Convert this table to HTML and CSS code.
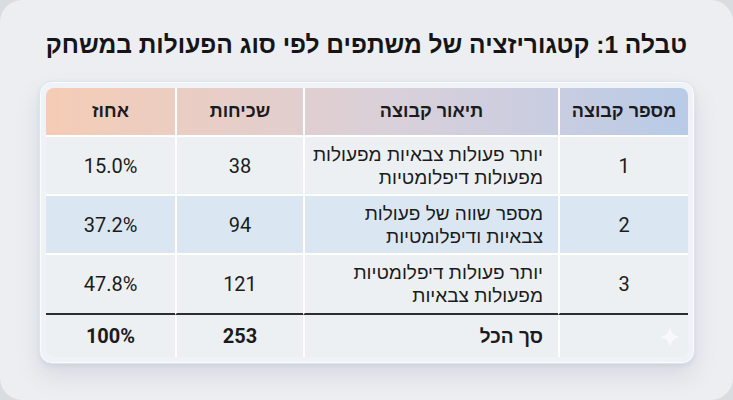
FILE: index.html
```html
<!DOCTYPE html>
<html lang="he" dir="rtl">
<head>
<meta charset="utf-8">
<title>טבלה 1</title>
<link rel="stylesheet" href="styles.css">
</head>
<body>
<div class="page">
  <h1 class="title">טבלה 1: קטגוריזציה של משתפים לפי סוג הפעולות במשחק</h1>
  <div class="frame">
    <div class="inner">
      <table class="tbl">
        <colgroup>
          <col class="c-group"><col class="c-desc"><col class="c-count"><col class="c-pct">
        </colgroup>
        <thead>
          <tr class="head">
            <th>מספר קבוצה</th>
            <th>תיאור קבוצה</th>
            <th>שכיחות</th>
            <th>אחוז</th>
          </tr>
        </thead>
        <tbody>
          <tr class="row">
            <td class="num">1</td>
            <td class="desc">יותר פעולות צבאיות מפעולות<br>מפעולות דיפלומטיות</td>
            <td class="num">38</td>
            <td class="num">15.0%</td>
          </tr>
          <tr class="row alt">
            <td class="num">2</td>
            <td class="desc">מספר שווה של פעולות<br>צבאיות ודיפלומטיות</td>
            <td class="num">94</td>
            <td class="num">37.2%</td>
          </tr>
          <tr class="row last">
            <td class="num">3</td>
            <td class="desc">יותר פעולות דיפלומטיות<br>מפעולות צבאיות</td>
            <td class="num">121</td>
            <td class="num">47.8%</td>
          </tr>
          <tr class="total">
            <td class="num mark-cell"><span class="mark"><svg width="22" height="22" viewBox="0 0 22 22"><path d="M11 1 C12 7 15 10 21 11 C15 12 12 15 11 21 C10 15 7 12 1 11 C7 10 10 7 11 1 Z" fill="#ffffff"/></svg></span></td>
            <td class="desc">סך הכל</td>
            <td class="num">253</td>
            <td class="num">100%</td>
          </tr>
        </tbody>
      </table>
    </div>
  </div>
</div>
</body>
</html>
```

FILE: styles.css
```css
html, body {
  margin: 0;
  padding: 0;
  background: #d9dce1;
}

.page {
  box-sizing: border-box;
  width: 733px;
  height: 400px;
  border-radius: 22px;
  background: #eceef1;
  padding-top: 30px;
  overflow: hidden;
  font-family: Roboto, "Liberation Sans", sans-serif;
  color: #1b1b1d;
}

.title {
  margin: 0 46px 0 0;
  font-family: "Liberation Sans", sans-serif;
  font-weight: 700;
  font-size: 24.5px;
  line-height: 30px;
  color: #151517;
  white-space: nowrap;
}

.frame {
  box-sizing: border-box;
  width: 656px;
  margin: 21px 38px 0 39px;
  padding: 6px;
  border: 1px solid #dae5ef;
  border-radius: 13px;
  background: #eff3f7;
  box-shadow: 0 12px 22px rgba(110, 120, 150, 0.16), 0 2px 4px rgba(110, 120, 150, 0.10), inset 0 0 0 1px rgba(255, 255, 255, 0.7);
}

.inner {
  border-radius: 8px;
  overflow: hidden;
  background: linear-gradient(to left, #b8cbe7 0%, #c8cde1 20%, #d8d0da 45%, #e6cec9 70%, #f5ccb5 100%) no-repeat top / 100% 47px;
}

.tbl {
  width: 642px;
  border-collapse: separate;
  border-spacing: 0;
  table-layout: fixed;
}

.c-group { width: 130px; }
.c-desc { width: 255px; }
.c-count { width: 128px; }
.c-pct { width: 129px; }

.tbl th,
.tbl td {
  padding: 0;
  text-align: center;
  vertical-align: middle;
  border-left: 2px solid #ffffff;
  white-space: nowrap;
}

.tbl th:last-child,
.tbl td:last-child {
  border-left: none;
}

.head th {
  height: 47px;
  border-bottom: 2px solid #ffffff;
  font-family: "Liberation Sans", sans-serif;
  font-weight: 700;
  font-size: 18px;
  color: #1b1b1d;
  background: transparent;
}

.row td {
  height: 57px;
  background: #edf0f3;
  border-bottom: 2px solid #ffffff;
  font-size: 20px;
}

.row.alt td {
  background: #dae7f3;
}

.row.last td {
  height: 58px;
  border-bottom: 2px solid #2d2d30;
}

.tbl td.desc {
  text-align: right;
  padding-right: 15px;
  font-family: "Liberation Sans", sans-serif;
  font-size: 19px;
  line-height: 23px;
}

.total td {
  height: 42px;
  background: #edf0f3;
  font-weight: 700;
  font-size: 20px;
}

.total td.desc {
  font-weight: 700;
}

.mark-cell {
  position: relative;
}

.mark {
  position: absolute;
  right: 7px;
  top: 11px;
  opacity: 0.6;
  line-height: 0;
}
```
